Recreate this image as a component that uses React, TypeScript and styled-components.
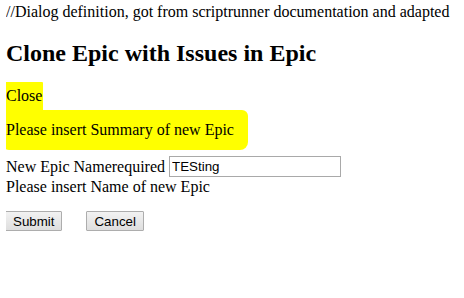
import React, { useState } from "react";
import styled, { createGlobalStyle } from "styled-components";

const GlobalStyle = createGlobalStyle`
  body {
    margin: 3px 8px 8px 6px;
    font-family: "Liberation Serif", "Times New Roman", serif;
    font-size: 16px;
    color: #000;
    background: #fff;
  }
`;

const Comment = styled.div`
  line-height: 18px;
`;

const Title = styled.h2`
  font-size: 24px;
  font-weight: bold;
  margin: 18px 0 15px;
  line-height: 28px;
`;

// yellow marker strokes drawn over the help texts
const Marked = styled.p<{ $pad: string; $radius: string }>`
  display: inline-block;
  margin: 0 0 0 -3px;
  padding: ${(p) => p.$pad};
  background: #ffff00;
  line-height: 18px;
  border-radius: ${(p) => p.$radius};
`;

const MarkedRow = styled.div`
  display: flex;
`;

const Form = styled.form`
  margin-top: 6px;
`;

const FieldRow = styled.div`
  display: flex;
  align-items: center;
  height: 21px;
  line-height: 18px;
`;

const TextInput = styled.input`
  box-sizing: border-box;
  margin-left: 4px;
  width: 172px;
  height: 21px;
  padding: 1px 1px 1px 2px;
  border: 1px solid #a9a9a9;
  font-family: "Liberation Sans", Arial, sans-serif;
  font-size: 13.33px;
  color: #000;
  outline: none;
`;

const Hint = styled.div`
  margin-top: 1px;
  line-height: 18px;
`;

const Buttons = styled.div`
  display: flex;
  gap: 24px;
  margin-top: 15px;
  margin-left: -1px;
`;

const Button = styled.button`
  box-sizing: border-box;
  font-family: "Liberation Sans", Arial, sans-serif;
  font-size: 13.33px;
  padding: 1px 7px;
  height: 20px;
  border: 1px solid #adadad;
  border-radius: 1px;
  background: linear-gradient(#f2f2f2, #dedede);
  color: #000;
`;

export default function App() {
  const [name, setName] = useState("TESting");
  return (
    <>
      <GlobalStyle />
      <Comment>//Dialog definition, got from scriptrunner documentation and adapted</Comment>
      <Title>Clone Epic with Issues in Epic</Title>
      <MarkedRow>
        <Marked $pad="5px 1px 5px 3px" $radius="1px 1px 0 2px">
          Close
        </Marked>
      </MarkedRow>
      <MarkedRow>
        <Marked $pad="11px 14px 11px 3px" $radius="0 6px 8px 6px">
          Please insert Summary of new Epic
        </Marked>
      </MarkedRow>
      <Form onSubmit={(e) => e.preventDefault()}>
        <FieldRow>
          <label htmlFor="epicName">
            New Epic Name<span>required</span>
          </label>
          <TextInput id="epicName" value={name} onChange={(e) => setName(e.target.value)} />
        </FieldRow>
        <Hint>Please insert Name of new Epic</Hint>
        <Buttons>
          <Button type="submit">Submit</Button>
          <Button type="button">Cancel</Button>
        </Buttons>
      </Form>
    </>
  );
}
